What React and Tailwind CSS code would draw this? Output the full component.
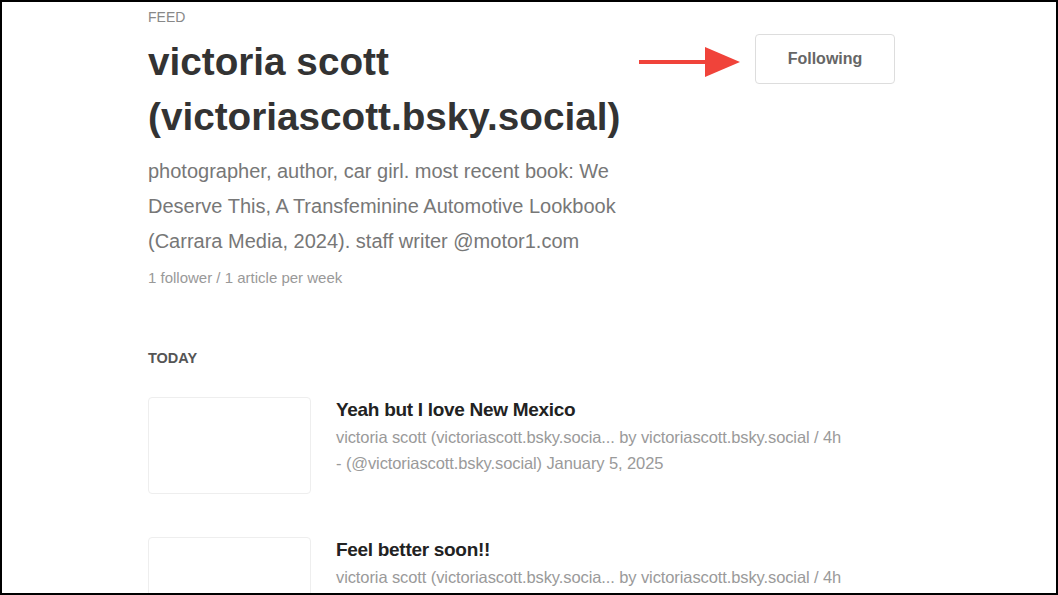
import React from 'react';

const articles = [
  {
    title: 'Yeah but I love New Mexico',
    meta: [
      'victoria scott (victoriascott.bsky.socia... by victoriascott.bsky.social / 4h',
      '- (@victoriascott.bsky.social) January 5, 2025',
    ],
  },
  {
    title: 'Feel better soon!!',
    meta: ['victoria scott (victoriascott.bsky.socia... by victoriascott.bsky.social / 4h'],
  },
];

const Arrow = () => (
  <svg width="102" height="32" viewBox="0 0 102 32" className="mt-[6px] block">
    <line x1="0" y1="16" x2="68" y2="16" stroke="#f0433a" strokeWidth="4" />
    <polygon points="66,1 101,16 66,31" fill="#f0433a" />
  </svg>
);

const ArticleRow = ({ article }) => (
  <div className="flex gap-[25px]">
    <div className="h-[97px] w-[163px] shrink-0 rounded-[4px] border border-[#eeeeee] bg-white" />
    <div>
      <h3 className="text-[19px] font-bold leading-[26px] tracking-[-0.3px] text-[#222]">
        {article.title}
      </h3>
      <div className="mt-[1px] text-[16.5px] leading-[26px] tracking-[-0.1px] text-[#9a9a9a]">
        {article.meta.map((line) => (
          <div key={line}>{line}</div>
        ))}
      </div>
    </div>
  </div>
);

export default function App() {
  return (
    <div
      className="h-[595px] w-[1058px] overflow-hidden border-2 border-black bg-white"
      style={{ fontFamily: '"Liberation Sans", Arial, sans-serif' }}
    >
      <div className="ml-[146px] w-[747px]">
        <div className="pt-[6px] text-[14px] leading-[18px] text-[#888]">FEED</div>
        <div className="flex items-start justify-between">
          <h1 className="mt-[8px] text-[38.7px] font-bold leading-[55px] text-[#333]">
            victoria scott
            <br />
            (victoriascott.bsky.social)
          </h1>
          <div className="mt-[8px] flex items-center gap-[14px]">
            <Arrow />
            <button className="h-[50px] w-[140px] rounded-[4px] border border-[#dddddd] bg-white text-[16px] font-bold text-[#666]">
              Following
            </button>
          </div>
        </div>
        <p className="mt-[10px] w-[500px] text-[20px] leading-[35px] text-[#777]">
          photographer, author, car girl. most recent book: We Deserve This, A Transfeminine
          Automotive Lookbook (Carrara Media, 2024). staff writer @motor1.com
        </p>
        <div className="mt-[9px] text-[15px] leading-[20px] text-[#999]">
          1 follower / 1 article per week
        </div>
        <div className="mt-[60px] text-[14.5px] font-bold leading-[20px] text-[#555]">TODAY</div>
        <div className="mt-[29px] flex flex-col gap-[43px]">
          {articles.map((a) => (
            <ArticleRow key={a.title} article={a} />
          ))}
        </div>
      </div>
    </div>
  );
}
